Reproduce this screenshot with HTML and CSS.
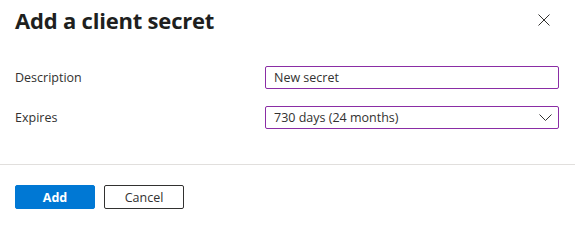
FILE: index.html
```html
<!DOCTYPE html>
<html>
<head>
<meta charset="utf-8">
<link rel="stylesheet" href="styles.css">
</head>
<body>
<div class="panel">
  <div class="header">
    <h1 class="title">Add a client secret</h1>
    <button class="close" aria-label="Close">
      <svg width="12" height="12" viewBox="0 0 12 12"><path d="M0.5 0.5 L11.5 11.5 M11.5 0.5 L0.5 11.5" stroke="#323130" stroke-width="1" fill="none"/></svg>
    </button>
  </div>
  <div class="form">
    <div class="row">
      <label class="label">Description</label>
      <div class="field"><span class="value">New secret</span></div>
    </div>
    <div class="row">
      <label class="label">Expires</label>
      <div class="field select"><span class="value">730 days (24 months)</span>
        <svg class="chev" width="13" height="8" viewBox="0 0 13 8"><path d="M0.5 0.5 L6.5 6.5 L12.5 0.5" stroke="#323130" stroke-width="1" fill="none"/></svg>
      </div>
    </div>
  </div>
  <div class="footer">
    <button class="btn primary">Add</button>
    <button class="btn">Cancel</button>
  </div>
</div>
</body>
</html>
```
FILE: styles.css
```css
html, body { margin: 0; padding: 0; background: #fff; }
body { font-family: "Open Sans", "Noto Sans", sans-serif; color: #323130; }
.panel { width: 575px; }
.header { display: flex; justify-content: space-between; align-items: center; padding: 5px 25px 0 15px; height: 30px; }
.title { margin: 0; font-size: 22px; font-weight: 700; color: #201f1e; letter-spacing: -0.2px; }
.close { border: 0; background: none; padding: 0; width: 12px; height: 12px; display: flex; }
.form { padding: 31px 16px 0 15px; display: flex; flex-direction: column; gap: 17px; }
.row { display: flex; align-items: center; height: 23px; }
.label { width: 250px; font-size: 12.5px; color: #323130; }
.field { box-sizing: border-box; width: 294px; height: 23px; border: 1px solid #8a2da5; border-radius: 2px; display: flex; align-items: center; padding: 0 8px; font-size: 12.5px; color: #323130; }
.select { justify-content: space-between; padding-right: 6px; }
.footer { margin-top: 35px; border-top: 1px solid #e1dfdd; padding: 20px 15px 0; display: flex; gap: 9px; }
.btn { box-sizing: border-box; width: 80px; height: 24px; border: 1px solid #323130; border-radius: 2px; background: #fff; font-family: inherit; font-size: 12.5px; color: #323130; padding: 0; }
.btn.primary { background: #0078d4; border-color: #0078d4; color: #fff; font-weight: 700; }
```
